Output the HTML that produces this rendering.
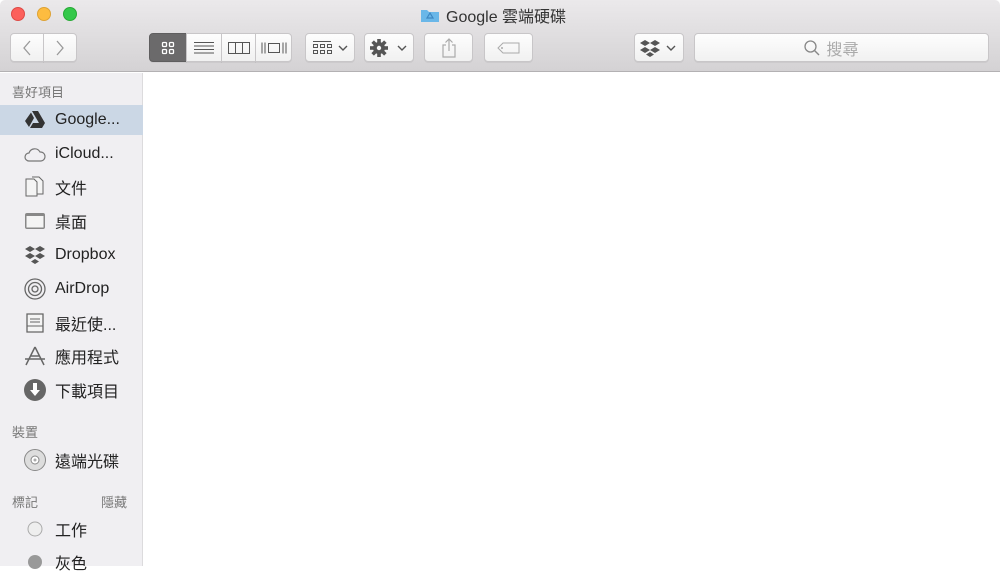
<!DOCTYPE html><html><head><meta charset="utf-8"><style>
*{margin:0;padding:0;box-sizing:border-box}
body{width:1000px;height:566px;overflow:hidden;background:#fff;font-family:"Liberation Sans","Noto Sans CJK TC",sans-serif;position:relative}
.tb{position:absolute;left:0;top:0;width:1000px;height:72px;background:linear-gradient(#ebe9eb,#d4d2d4);border-bottom:1px solid #b3b1b3;border-radius:5px 5px 0 0}
.dot{position:absolute;top:7px;width:14px;height:14px;border-radius:50%}
.btn{position:absolute;top:33px;height:29px;background:linear-gradient(#fdfdfd,#f1f1f1);border:1px solid #c8c6c8;border-radius:4px;box-shadow:0 1px 0 rgba(0,0,0,.05);display:flex;align-items:center;justify-content:center}
.title{position:absolute;top:3px;left:420px;font-size:16px;color:#333;display:flex;align-items:center;gap:6px}
.sb{position:absolute;left:0;top:73px;width:143px;height:493px;background:#f0eff2;border-right:1px solid #dcdbdd}
.h{position:absolute;left:12px;font-size:13px;color:#777}
.it{position:absolute;left:0;width:143px;height:30px;display:flex;align-items:center;font-size:16px;color:#222}
.it span{position:absolute;left:55px}
.ic{position:absolute;left:23px;width:24px;height:24px;top:3px}
</style></head><body>
<div class="tb">
<div class="dot" style="left:11px;background:#fc605b;border:1px solid #de4a45"></div>
<div class="dot" style="left:37px;background:#fdbc40;border:1px solid #dea234"></div>
<div class="dot" style="left:63px;background:#34c84a;border:1px solid #27aa35"></div>
<div class="title"><svg width="20" height="16"><path d="M1 3h6l2 2h10v10H1z" fill="#6ab7e8"/><path d="M10 6l3 5h-6z" fill="none" stroke="#3d87c2" stroke-width="1.2"/></svg>Google 雲端硬碟</div>
<div class="btn" style="left:10px;width:34px;border-radius:4px 0 0 4px"><svg width="12" height="16"><path d="M9 1L3 8l6 7" fill="none" stroke="#999" stroke-width="1.3"/></svg></div>
<div class="btn" style="left:43px;width:34px;border-radius:0 4px 4px 0"><svg width="12" height="16"><path d="M3 1l6 7-6 7" fill="none" stroke="#999" stroke-width="1.3"/></svg></div>
<div class="btn" style="left:149px;width:38px;background:#6b6a6b;border-color:#5f5e5f;border-radius:4px 0 0 4px"><svg width="14" height="14"><g fill="none" stroke="#fff" stroke-width="1.3"><rect x="1.5" y="1.5" width="4" height="4" rx="1"/><rect x="8.5" y="1.5" width="4" height="4" rx="1"/><rect x="1.5" y="8.5" width="4" height="4" rx="1"/><rect x="8.5" y="8.5" width="4" height="4" rx="1"/></g></svg></div>
<div class="btn" style="left:186px;width:36px;border-radius:0"><svg width="20" height="14"><path d="M0 1.5h20M0 5h20M0 8.5h20M0 12h20" stroke="#555"/></svg></div>
<div class="btn" style="left:221px;width:35px;border-radius:0"><svg width="22" height="14"><rect x=".5" y="1.5" width="21" height="11" fill="none" stroke="#555"/><path d="M7.5 1.5v11M14.5 1.5v11" stroke="#555"/></svg></div>
<div class="btn" style="left:255px;width:37px;border-radius:0 4px 4px 0"><svg width="26" height="14"><path d="M1 1.5v11M4 1.5v11M22 1.5v11M25 1.5v11" stroke="#555"/><rect x="7.5" y="2.5" width="11" height="9" fill="none" stroke="#555"/></svg></div>
<div class="btn" style="left:305px;width:50px"><svg width="40" height="16"><g fill="none" stroke="#555"><path d="M3 1.5h18"/><rect x="3.5" y="4.5" width="4" height="3"/><rect x="10.5" y="4.5" width="4" height="3"/><rect x="17.5" y="4.5" width="4" height="3"/><rect x="3.5" y="10.5" width="4" height="3"/><rect x="10.5" y="10.5" width="4" height="3"/><rect x="17.5" y="10.5" width="4" height="3"/><path d="M29 6l4 4 4-4" stroke-width="1.4"/></g></svg></div>
<div class="btn" style="left:364px;width:50px"><svg width="40" height="18"><g transform="translate(10 9)" fill="#555"><circle r="6"/><rect x="-1.8" y="-9" width="3.6" height="18"/><rect x="-1.8" y="-9" width="3.6" height="18" transform="rotate(45)"/><rect x="-1.8" y="-9" width="3.6" height="18" transform="rotate(90)"/><rect x="-1.8" y="-9" width="3.6" height="18" transform="rotate(135)"/><circle r="2.2" fill="#f5f5f5"/></g><path d="M29 7l4 4 4-4" fill="none" stroke="#555" stroke-width="1.4"/></svg></div>
<div class="btn" style="left:424px;width:49px"><svg width="16" height="20"><path d="M5 7H2v12h12V7h-3M8 13V1M4.5 4.5L8 1l3.5 3.5" fill="none" stroke="#aaa" stroke-width="1.2"/></svg></div>
<div class="btn" style="left:484px;width:49px"><svg width="24" height="12"><path d="M6 1h16v10H6L1 6z" fill="none" stroke="#aaa"/><circle cx="5" cy="6" r="1" fill="#aaa"/></svg></div>
<div class="btn" style="left:634px;width:50px"><svg width="40" height="18"><g fill="#555"><path d="M6 1l5 3-5 3-5-3z"/><path d="M16 1l5 3-5 3-5-3z"/><path d="M6 8l5 3-5 3-5-3z"/><path d="M16 8l5 3-5 3-5-3z"/><path d="M11 13l4 2.5-4 2.5-4-2.5z"/></g><path d="M28 7l4 4 4-4" fill="none" stroke="#555" stroke-width="1.4"/></svg></div>
<div class="btn" style="left:694px;width:295px;color:#aaa;font-size:16px;gap:6px;padding-right:20px"><svg width="16" height="16"><circle cx="6.5" cy="6.5" r="5.5" fill="none" stroke="#888" stroke-width="1.3"/><path d="M10.5 10.5l4.5 4.5" stroke="#888" stroke-width="1.4"/></svg>搜尋</div>
</div>
<div class="sb">
<div class="h" style="top:9px">喜好項目</div>
<div class="it" style="top:32px;background:#cbd7e5"><svg class="ic" viewBox="0 0 24 24"><path d="M9 3h6l7 12h-6z M8 4.5l3 5.5-5 9-4-6z M7 20l3-5h12l-3 5z" fill="#333"/></svg><span>Google...</span></div>
<div class="it" style="top:66px"><svg class="ic" viewBox="0 0 24 24"><path d="M6 19a4 4 0 0 1 0-8 6 6 0 0 1 11-1 4.5 4.5 0 0 1 1 9z" fill="none" stroke="#777" stroke-width="1.2"/></svg><span>iCloud...</span></div>
<div class="it" style="top:99px"><svg class="ic" viewBox="0 0 24 24"><path d="M3 4h8l3 3v14H3z M9 2h7l4 4v13h-6" fill="#f4f4f4" stroke="#666"/></svg><span>文件</span></div>
<div class="it" style="top:133px"><svg class="ic" viewBox="0 0 24 24"><rect x="2" y="4" width="20" height="16" rx="2" fill="#888"/><rect x="3.5" y="7" width="17" height="11.5" fill="#f4f4f4"/></svg><span>桌面</span></div>
<div class="it" style="top:167px"><svg class="ic" viewBox="0 0 24 24"><g fill="#555"><path d="M7 3l5 3-5 3-5-3z"/><path d="M17 3l5 3-5 3-5-3z"/><path d="M7 10l5 3-5 3-5-3z"/><path d="M17 10l5 3-5 3-5-3z"/><path d="M12 16l4 2.5-4 2.5-4-2.5z"/></g></svg><span>Dropbox</span></div>
<div class="it" style="top:201px"><svg class="ic" viewBox="0 0 24 24"><g fill="none" stroke="#666" stroke-width="1.3"><circle cx="12" cy="12" r="10"/><circle cx="12" cy="12" r="6.5"/><circle cx="12" cy="12" r="3"/></g></svg><span>AirDrop</span></div>
<div class="it" style="top:235px"><svg class="ic" viewBox="0 0 24 24"><path d="M4 3h16v18H4z" fill="#f4f4f4" stroke="#666" stroke-width="1.3"/><path d="M7 8h10M7 11h10M4 15h16" stroke="#666"/></svg><span>最近使...</span></div>
<div class="it" style="top:268px"><svg class="ic" viewBox="0 0 24 24"><path d="M12 3L3 21M12 3l9 18M2 15h20M7 12h10" fill="none" stroke="#666" stroke-width="1.5"/></svg><span>應用程式</span></div>
<div class="it" style="top:302px"><svg class="ic" viewBox="0 0 24 24"><circle cx="12" cy="12" r="11" fill="#666"/><path d="M10 5h4v7h3l-5 6-5-6h3z" fill="#fff"/></svg><span>下載項目</span></div>
<div class="h" style="top:349px">裝置</div>
<div class="it" style="top:372px"><svg class="ic" viewBox="0 0 24 24"><circle cx="12" cy="12" r="10.5" fill="#ddd" stroke="#888"/><circle cx="12" cy="12" r="4" fill="#fff" stroke="#888"/><circle cx="12" cy="12" r="1.5" fill="#aaa"/></svg><span>遠端光碟</span></div>
<div class="h" style="top:419px">標記</div><div class="h" style="top:419px;left:101px">隱藏</div>
<div class="it" style="top:441px"><svg class="ic" viewBox="0 0 24 24"><circle cx="12" cy="12" r="7" fill="#eee" stroke="#aaa"/></svg><span>工作</span></div>
<div class="it" style="top:474px"><svg class="ic" viewBox="0 0 24 24"><circle cx="12" cy="12" r="7" fill="#999"/></svg><span>灰色</span></div>
</div>
</body></html>
